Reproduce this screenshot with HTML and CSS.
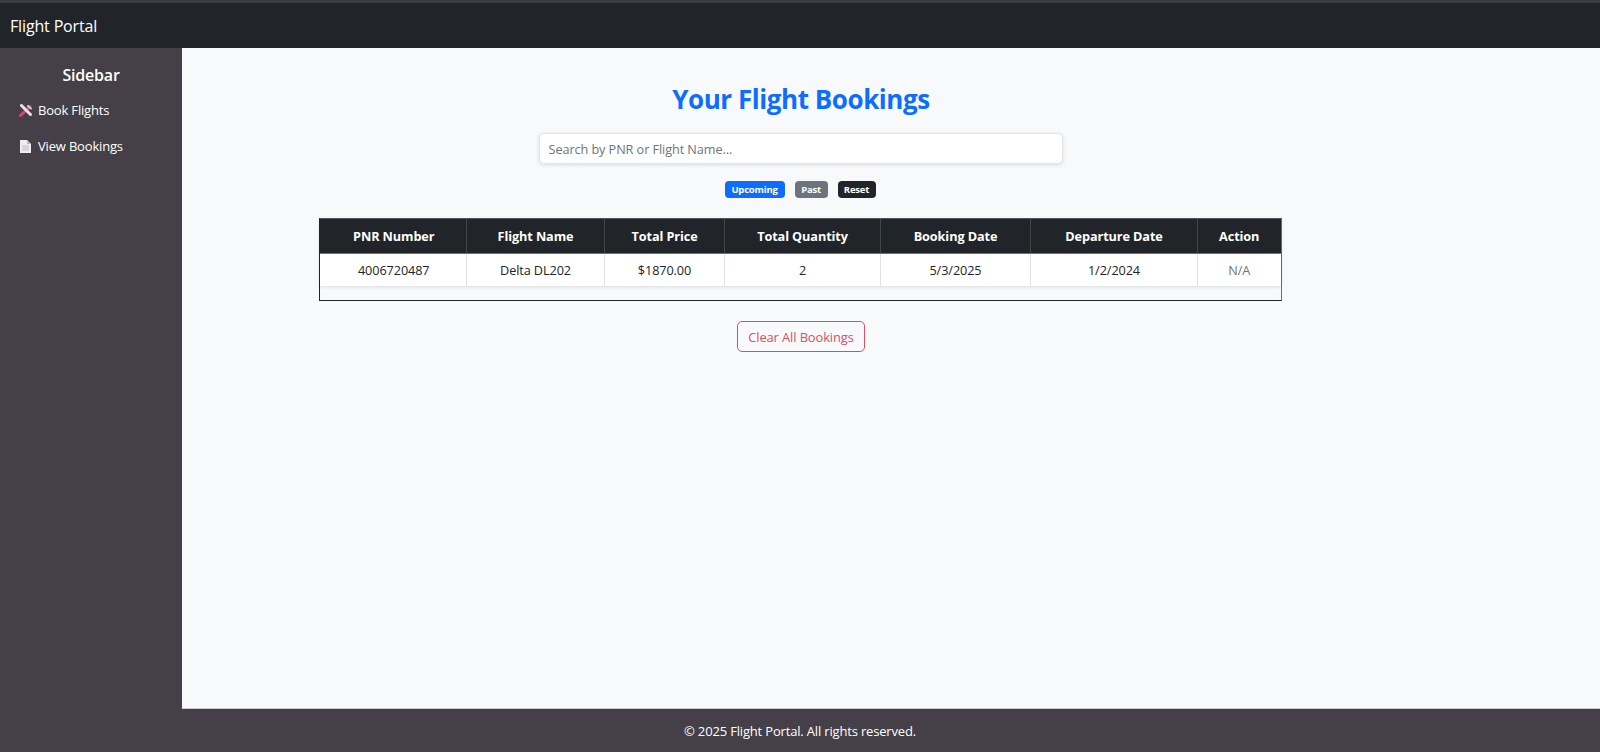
FILE: index.html
```html
<!DOCTYPE html>
<html lang="en">
<head>
    <meta charset="UTF-8">
    <meta name="viewport" content="width=device-width, initial-scale=1.0">
    <title>Flight Portal</title>
    <link rel="stylesheet" href="styles.css">
</head>
<body>
    <nav class="navbar">
        <a class="brand" href="#">Flight Portal</a>
    </nav>
    <div class="layout">
        <aside class="sidebar">
            <h2 class="sidebar-title">Sidebar</h2>
            <a class="side-link" href="#">
                <svg class="side-icon" viewBox="0 0 13 13">
                    <path d="M1.5 11.5 L11 2.5" stroke="#d9436f" stroke-width="3" stroke-linecap="round"/>
                    <path d="M2.5 1.5 L11.5 10.5" stroke="#f3dde5" stroke-width="3" stroke-linecap="round"/>
                    <path d="M9 2 L12 4.5" stroke="#c3cfe6" stroke-width="2" stroke-linecap="round"/>
                </svg>
                Book Flights
            </a>
            <a class="side-link" href="#">
                <svg class="side-icon" viewBox="0 0 13 13">
                    <path d="M1 0 H8 L12 4 V13 H1 Z" fill="#f1eaf3"/>
                    <path d="M8 0 L12 4 H8 Z" fill="#bdb4c4"/>
                    <path d="M3 6 H10 M3 8 H10 M3 10 H10" stroke="#b5aebb" stroke-width="0.8"/>
                </svg>
                View Bookings
            </a>
        </aside>
        <main class="content">
            <h1 class="page-title">Your Flight Bookings</h1>
            <input class="search" type="text" placeholder="Search by PNR or Flight Name...">
            <div class="filters">
                <button class="pill pill-blue">Upcoming</button>
                <button class="pill pill-grey">Past</button>
                <button class="pill pill-dark">Reset</button>
            </div>
            <div class="table-wrap">
                <table class="bookings">
                    <colgroup>
                        <col class="col-pnr">
                        <col class="col-name">
                        <col class="col-price">
                        <col class="col-qty">
                        <col class="col-booked">
                        <col class="col-depart">
                        <col class="col-action">
                    </colgroup>
                    <thead>
                        <tr>
                            <th>PNR Number</th>
                            <th>Flight Name</th>
                            <th>Total Price</th>
                            <th>Total Quantity</th>
                            <th>Booking Date</th>
                            <th>Departure Date</th>
                            <th>Action</th>
                        </tr>
                    </thead>
                    <tbody>
                        <tr>
                            <td>4006720487</td>
                            <td>Delta DL202</td>
                            <td>$1870.00</td>
                            <td>2</td>
                            <td>5/3/2025</td>
                            <td>1/2/2024</td>
                            <td class="muted">N/A</td>
                        </tr>
                    </tbody>
                </table>
            </div>
            <button class="clear-btn">Clear All Bookings</button>
        </main>
    </div>
    <footer class="footer">© 2025 Flight Portal. All rights reserved.</footer>
</body>
</html>
```

FILE: styles.css
```css
* {
    box-sizing: border-box;
}
body {
    margin: 0;
    height: 100vh;
    display: flex;
    flex-direction: column;
    font-family: "Open Sans", "Noto Sans", sans-serif;
    background-color: #453f47;
    overflow: hidden;
}
.navbar {
    height: 48px;
    flex-shrink: 0;
    display: flex;
    align-items: center;
    padding: 1px 0 0 10px;
    background-color: #212529;
    border-top: 3px solid #3a3d40;
}
.brand {
    color: #fff;
    font-size: 16px;
    letter-spacing: -0.15px;
    text-decoration: none;
}
.layout {
    flex: 1;
    display: flex;
    min-height: 0;
}
.sidebar {
    width: 182px;
    flex-shrink: 0;
    padding: 17px 0 0 20px;
    background-color: #453f47;
    color: #fff;
}
.sidebar-title {
    margin: 0 0 7px;
    padding-right: 20px;
    font-size: 16px;
    font-weight: 600;
    line-height: 20px;
    text-align: center;
    letter-spacing: -0.2px;
}
.side-link {
    height: 36px;
    display: flex;
    align-items: center;
    gap: 6px;
    color: #fff;
    font-size: 13px;
    letter-spacing: -0.18px;
    text-decoration: none;
}
.side-icon {
    width: 13px;
    height: 13px;
    margin-left: -1px;
}
.content {
    flex: 1;
    display: flex;
    flex-direction: column;
    align-items: center;
    padding: 31px 182px 0 0;
    background-color: #f8f9fa;
    border-bottom: 1px solid #c9c9cc;
}
.page-title {
    margin: 0 0 14px 2px;
    color: #0d6efd;
    font-size: 26px;
    font-weight: 700;
    line-height: 40px;
    letter-spacing: -0.45px;
}
.search {
    width: 524px;
    height: 31px;
    margin-left: 1px;
    padding: 0 9px;
    border: 1px solid #e3e5e8;
    border-radius: 5px;
    background: #fff;
    box-shadow: 0 1px 4px rgba(0, 0, 0, 0.12);
    font: 12.7px "Open Sans", sans-serif;
    letter-spacing: -0.08px;
}
.search::placeholder {
    color: #6c757d;
}
.filters {
    display: flex;
    gap: 10px;
    margin: 17px 0 20px;
}
.pill {
    height: 17px;
    padding: 0;
    border: none;
    border-radius: 4px;
    color: #fff;
    font: 700 9.5px "Open Sans", sans-serif;
    letter-spacing: -0.2px;
    cursor: pointer;
}
.pill-blue {
    width: 60px;
    background-color: #0d6efd;
}
.pill-grey {
    width: 33px;
    background-color: #6c757d;
}
.pill-dark {
    width: 38px;
    background-color: #212529;
}
.table-wrap {
    width: 963px;
    height: 83px;
    border: 1px solid #212529;
    border-top-color: #55585c;
    border-right-color: #6c6f73;
}
.bookings {
    width: 961px;
    table-layout: fixed;
    border-collapse: collapse;
    background: #fff;
    box-shadow: 0 1px 4px rgba(0, 0, 0, 0.12);
    font-size: 12.7px;
    letter-spacing: -0.1px;
    text-align: center;
}
.col-pnr { width: 147px; }
.col-name { width: 138px; }
.col-price { width: 120px; }
.col-qty { width: 156px; }
.col-booked { width: 150px; }
.col-depart { width: 167px; }
.col-action { width: 83px; }
.bookings th {
    height: 34px;
    padding: 0;
    background-color: #212529;
    color: #fff;
    font-weight: 700;
    border-left: 1px solid #41464b;
    border-bottom: 1px solid #6c6f73;
}
.bookings td {
    height: 33px;
    padding: 0;
    color: #212529;
    border-left: 1px solid #dee2e6;
}
.bookings th:first-child,
.bookings td:first-child {
    padding-left: 2px;
    border-left: none;
}
.bookings .muted {
    color: #6c757d;
}
.clear-btn {
    width: 128px;
    height: 31px;
    margin: 20px 0 0 2px;
    padding: 0;
    border: 1px solid #d9505f;
    border-radius: 5px;
    background: transparent;
    color: #d9505f;
    font: 12.9px "Open Sans", sans-serif;
    letter-spacing: -0.1px;
    cursor: pointer;
}
.footer {
    height: 43px;
    flex-shrink: 0;
    display: flex;
    align-items: center;
    justify-content: center;
    background-color: #453f47;
    color: #fff;
    font-size: 13px;
    letter-spacing: -0.17px;
}
```
